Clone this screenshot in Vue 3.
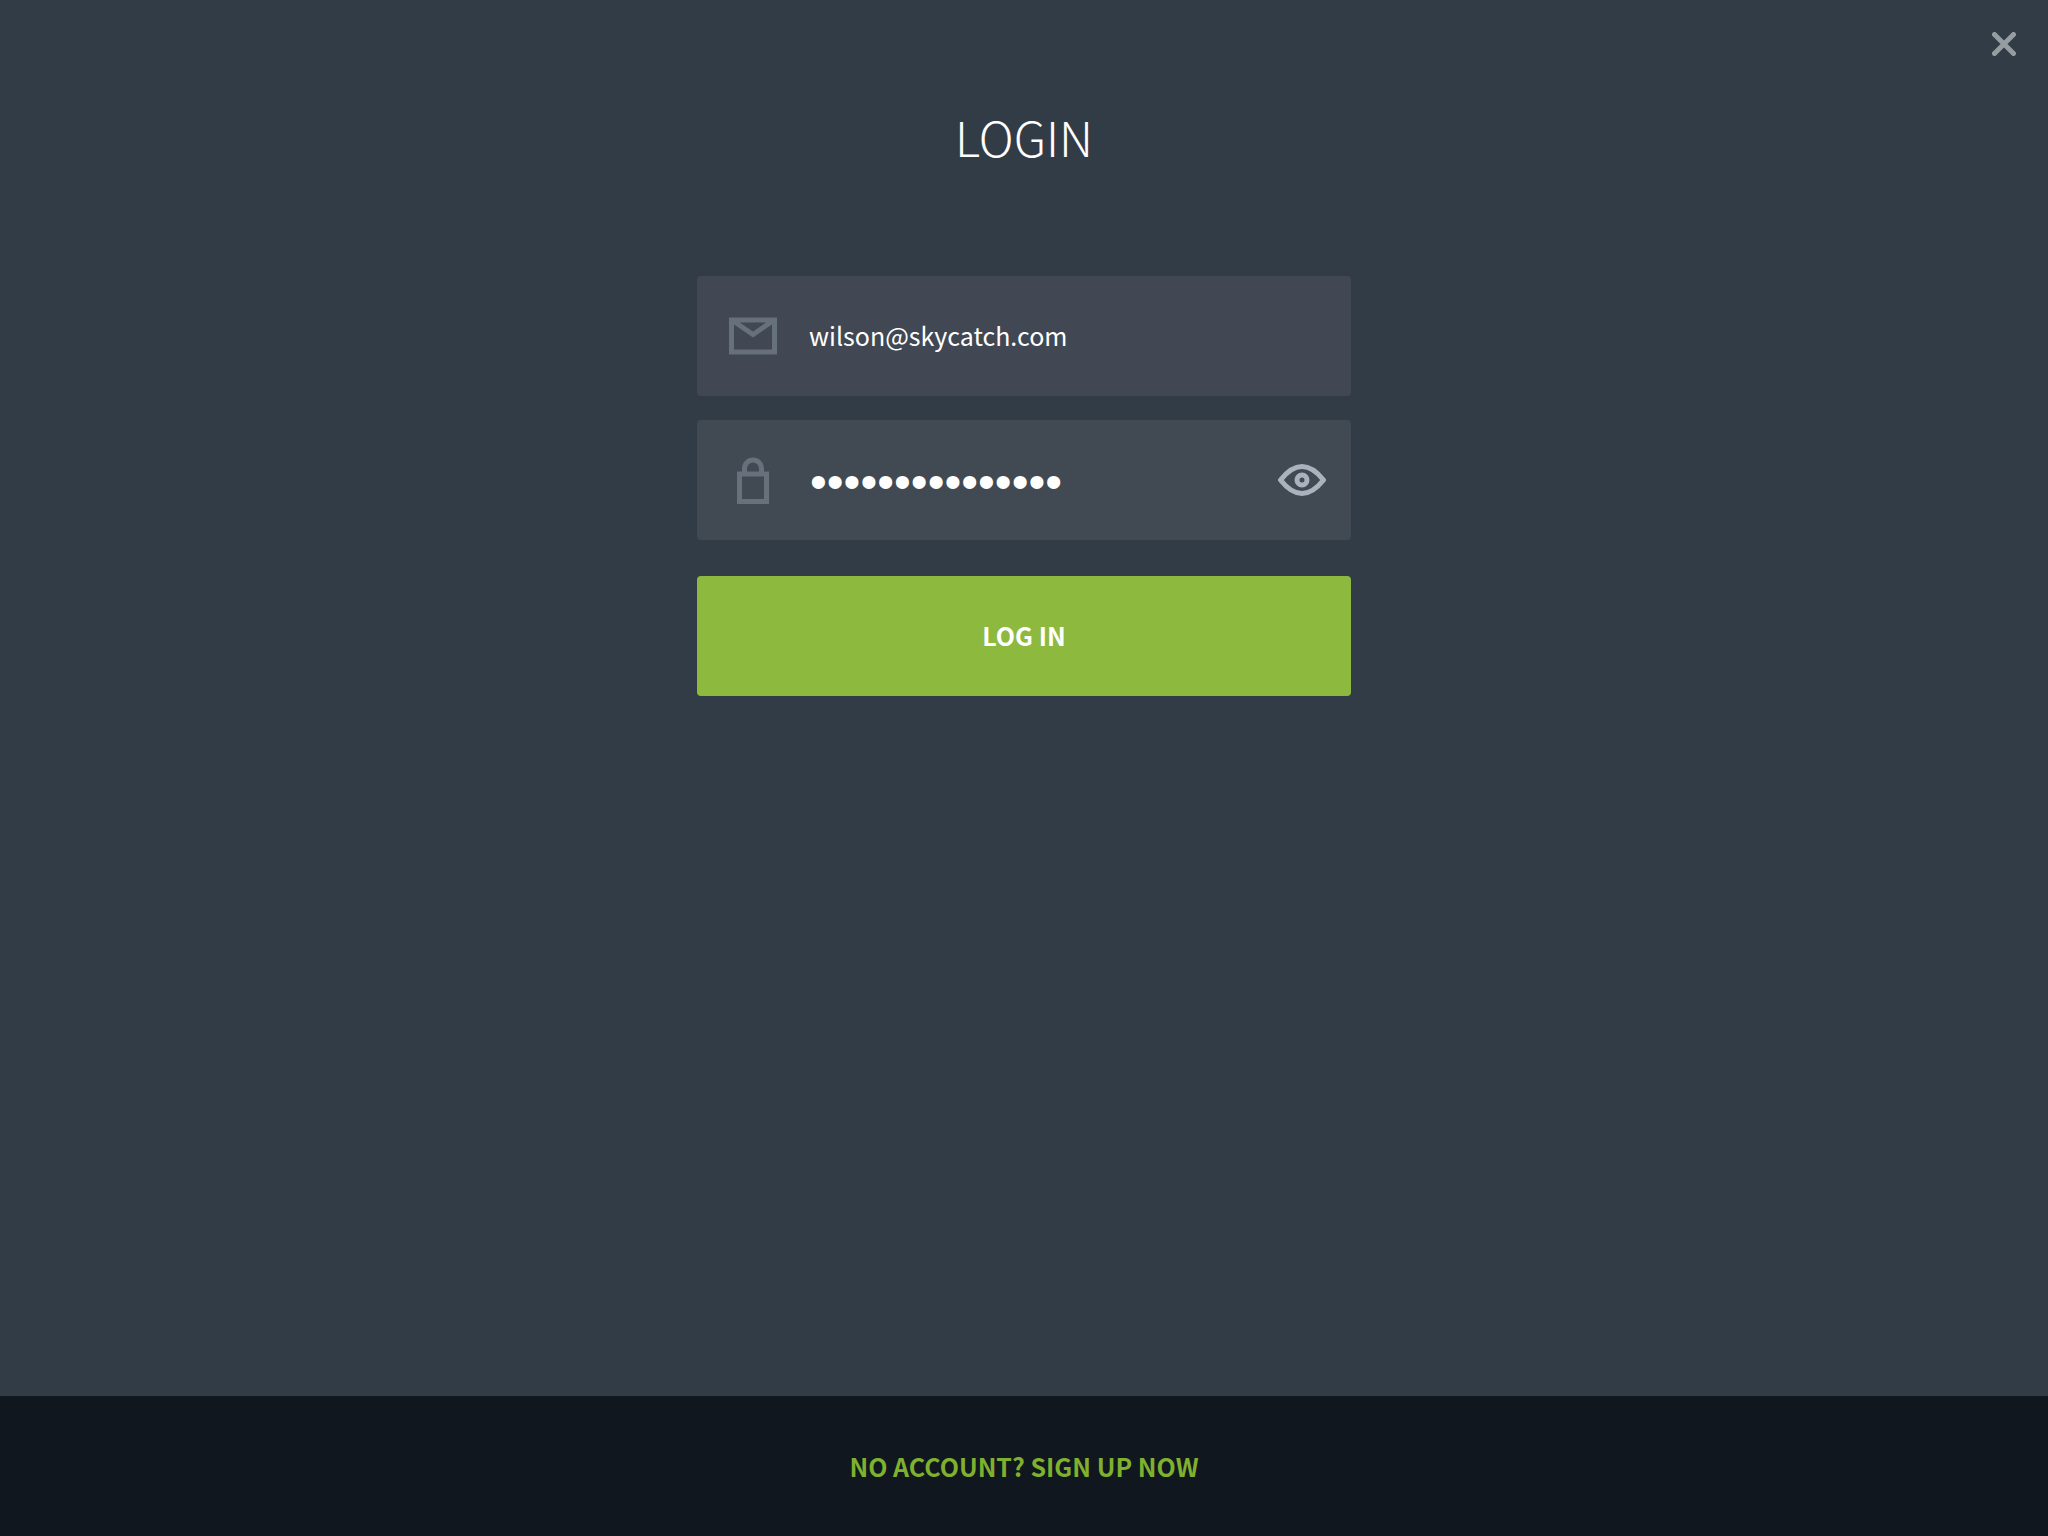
<script setup>
import { ref } from 'vue'

const email = ref('wilson@skycatch.com')
const password = ref('skycatch-wilson')
const revealed = ref(false)
</script>

<template>
  <div class="page">
    <header class="topbar">
      <button class="close" type="button" aria-label="Close">
        <svg width="24" height="24" viewBox="0 0 24 24" aria-hidden="true">
          <path d="M2.5 2.5 21.5 21.5M21.5 2.5 2.5 21.5" fill="none" stroke="currentColor" stroke-width="5" stroke-linecap="round" />
        </svg>
      </button>
    </header>

    <main class="content">
      <h1 class="title">LOGIN</h1>
      <form class="form" @submit.prevent>
        <div class="field email">
          <label class="icon" for="email" aria-label="Email">
            <svg width="48" height="48" viewBox="0 0 48 48" aria-hidden="true">
              <path d="M2.5 8h43v32h-43zM5 9.500 24 22.500 43 9.500" fill="none" stroke="currentColor" stroke-width="5" />
            </svg>
          </label>
          <input id="email" v-model="email" class="input" type="email" />
        </div>
        <div class="field password">
          <label class="icon" for="password" aria-label="Password">
            <svg width="48" height="48" viewBox="0 0 48 48" aria-hidden="true">
              <path d="M10.500 18h27v27.500h-27zM15.500 17v-4.500a8.500 8.500 0 0 1 17 0V17" fill="none" stroke="currentColor" stroke-width="5" />
            </svg>
          </label>
          <input id="password" v-model="password" class="input" :class="{ dots: !revealed }" :type="revealed ? 'text' : 'password'" />
          <button class="reveal" type="button" aria-label="Show password" @click="revealed = !revealed">
            <svg width="48" height="32" viewBox="0 0 48 32" aria-hidden="true">
              <path d="M2.500 16C10 6.500 17 2.500 24 2.500S38 6.500 45.500 16C38 25.500 31 29.500 24 29.500S10 25.500 2.500 16Z" fill="none" stroke="currentColor" stroke-width="5" stroke-linejoin="round" />
              <circle cx="24" cy="16" r="5" fill="none" stroke="currentColor" stroke-width="5" />
            </svg>
          </button>
        </div>
        <button class="submit" type="submit">LOG IN</button>
      </form>
    </main>

    <footer class="footer">
      <a class="signup" href="#signup">NO ACCOUNT? SIGN UP NOW</a>
    </footer>
  </div>
</template>

<style>
body {
  background: #323c46;
}
</style>

<style scoped>
.page {
  display: flex;
  flex-direction: column;
  min-height: 100vh;
  background: #323c46;
  color: #fff;
  font-family: "Noto Sans CJK SC", "Noto Sans", sans-serif;
}

button {
  border: 0;
  padding: 0;
  background: none;
  font-family: inherit;
  cursor: pointer;
}

svg {
  display: block;
}

.topbar {
  display: flex;
  justify-content: flex-end;
  padding: 32px 32px 0;
}

.close {
  color: #959da1;
}

.content {
  flex: 1;
  display: flex;
  flex-direction: column;
  align-items: center;
  padding: 48px 24px;
}

.title {
  margin: 0 0 108px;
  font-size: 48px;
  font-weight: 300;
  line-height: 64px;
}

.form {
  width: 100%;
  max-width: 654px;
}

.field {
  display: flex;
  align-items: center;
  box-sizing: border-box;
  height: 120px;
  margin-bottom: 24px;
  padding: 0 25px 0 32px;
  border-radius: 4px;
}

.email {
  background: #414853;
}

.password {
  margin-bottom: 36px;
  background: #414952;
}

.icon {
  flex: none;
  color: #66717b;
}

.input {
  flex: 1;
  min-width: 0;
  height: 64px;
  margin: 0 24px 0 32px;
  padding: 0 0 2px;
  border: 0;
  outline: 0;
  background: none;
  color: #fff;
  font-family: inherit;
  font-size: 25px;
}

.dots {
  padding: 2px 0 0 1px;
  font-family: "Liberation Sans", sans-serif;
  font-size: 48px;
}

.reveal {
  flex: none;
  color: #a9b3bd;
}

.submit {
  width: 100%;
  height: 120px;
  padding-bottom: 2px;
  border-radius: 4px;
  background: #8eb93f;
  color: #fff;
  font-size: 25px;
  font-weight: 700;
}

.footer {
  display: flex;
  align-items: center;
  justify-content: center;
  height: 140px;
  background: #10171e;
}

.signup {
  color: #7fb02e;
  font-size: 25px;
  font-weight: 700;
  text-decoration: none;
}
</style>
